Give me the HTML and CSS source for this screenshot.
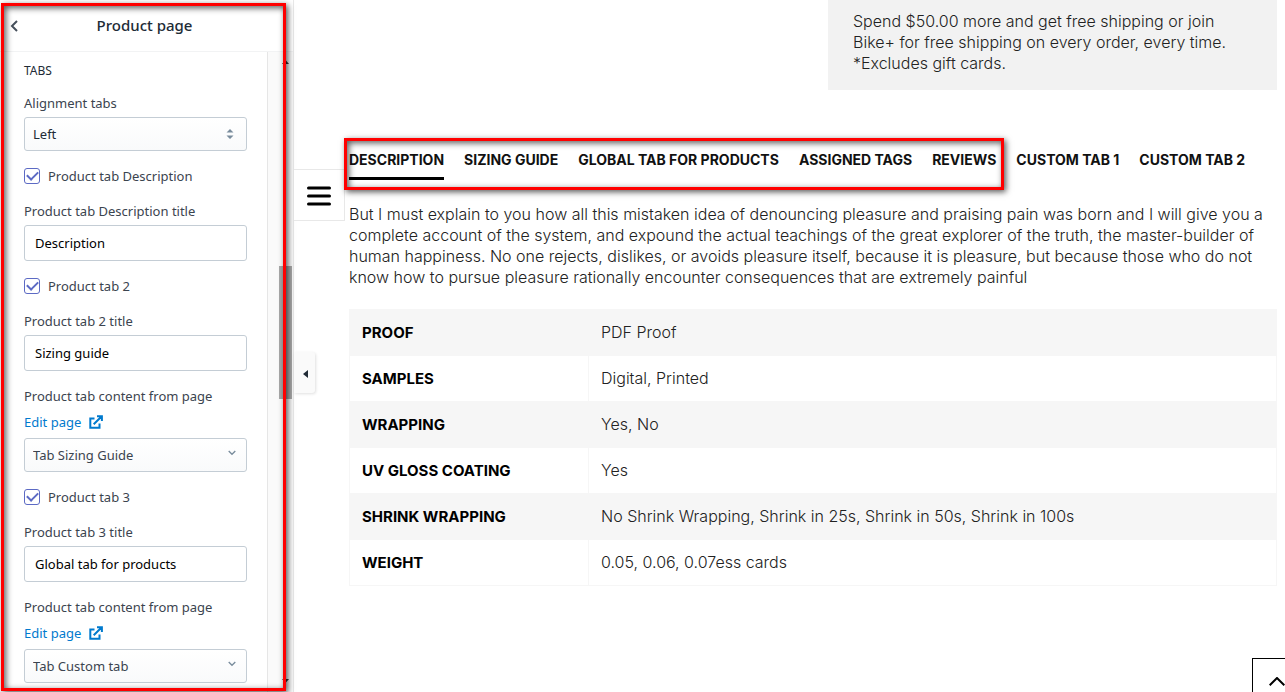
FILE: index.html
```html
<!DOCTYPE html>
<html lang="en">
<head>
<meta charset="utf-8">
<meta name="viewport" content="width=device-width, initial-scale=1">
<title>Product page</title>
<link rel="stylesheet" href="styles.css">
</head>
<body>
<div class="page">
  <aside class="sidebar">
    <header class="sidebar-head">
      <button class="back" type="button" aria-label="Back">
        <svg width="8" height="12" viewBox="0 0 8 12"><path d="M7 1 2 6l5 5" fill="none" stroke="#454f5b" stroke-width="2"/></svg>
      </button>
      <h1 class="sidebar-title">Product page</h1>
    </header>
    <div class="sidebar-body">
      <form class="settings">
        <h2 class="group-title">TABS</h2>
        <div class="field">
          <label for="align">Alignment tabs</label>
          <div class="select-wrap">
            <select id="align" class="control select select-dark"><option>Left</option></select>
            <svg class="sort-icon" width="8" height="12" viewBox="0 0 8 12"><path d="M.5 4.500 4 1l3.500 3.500zM.5 7.500h7L4 11z" fill="#798c9c"/></svg>
          </div>
        </div>
        <label class="check"><input type="checkbox" checked><span>Product tab Description</span></label>
        <div class="field">
          <label for="t1">Product tab Description title</label>
          <input id="t1" class="control text" type="text" value="Description">
        </div>
        <label class="check"><input type="checkbox" checked><span>Product tab 2</span></label>
        <div class="field">
          <label for="t2">Product tab 2 title</label>
          <input id="t2" class="control text" type="text" value="Sizing guide">
        </div>
        <div class="field field-page">
          <label for="p2">Product tab content from page</label>
          <a class="edit" href="#">Edit page
            <svg width="14" height="14" viewBox="0 0 14 14" fill="none" stroke="#007ace" stroke-width="2"><path d="M5.500 3.500H1.300V12.700H10.500V8.500M4.700 9.300 12 2M8 1.200h4.900V6"/></svg>
          </a>
          <div class="select-wrap">
            <select id="p2" class="control select"><option>Tab Sizing Guide</option></select>
            <svg class="caret-icon" width="8" height="6" viewBox="0 0 8 6"><path d="M.7 1 4 4.300 7.300 1" fill="none" stroke="#798c9c" stroke-width="1.300"/></svg>
          </div>
        </div>
        <label class="check"><input type="checkbox" checked><span>Product tab 3</span></label>
        <div class="field">
          <label for="t3">Product tab 3 title</label>
          <input id="t3" class="control text" type="text" value="Global tab for products">
        </div>
        <div class="field field-page">
          <label for="p3">Product tab content from page</label>
          <a class="edit" href="#">Edit page
            <svg width="14" height="14" viewBox="0 0 14 14" fill="none" stroke="#007ace" stroke-width="2"><path d="M5.500 3.500H1.300V12.700H10.500V8.500M4.700 9.300 12 2M8 1.200h4.900V6"/></svg>
          </a>
          <div class="select-wrap">
            <select id="p3" class="control select"><option>Tab Custom tab</option></select>
            <svg class="caret-icon" width="8" height="6" viewBox="0 0 8 6"><path d="M.7 1 4 4.300 7.300 1" fill="none" stroke="#798c9c" stroke-width="1.300"/></svg>
          </div>
        </div>
      </form>
      <div class="scrollbar">
        <svg width="7" height="4" viewBox="0 0 7 4"><path d="M0 4 3.500 0 7 4z" fill="#333"/></svg>
        <div class="thumb"></div>
        <svg width="7" height="4" viewBox="0 0 7 4"><path d="M0 0h7L3.500 4z" fill="#333"/></svg>
      </div>
    </div>
    <div class="mark mark-sidebar"></div>
    <button class="menu" type="button" aria-label="Menu">
      <svg width="24" height="20" viewBox="0 0 24 20"><path d="M1.500 2h21M1.500 10h21M1.500 18h21" stroke="#000" stroke-width="3" stroke-linecap="round"/></svg>
    </button>
    <button class="collapse" type="button" aria-label="Collapse">
      <svg width="5" height="8" viewBox="0 0 5 8"><path d="M5 0v8L0 4z" fill="#212b36"/></svg>
    </button>
  </aside>

  <main class="preview">
    <p class="promo">Spend $50.00 more and get free shipping or join Bike+ for free shipping on every order, every time. *Excludes gift cards.</p>
    <nav class="tabs">
      <button class="tab active" type="button">DESCRIPTION</button>
      <button class="tab" type="button">SIZING GUIDE</button>
      <button class="tab" type="button">GLOBAL TAB FOR PRODUCTS</button>
      <button class="tab" type="button">ASSIGNED TAGS</button>
      <button class="tab" type="button">REVIEWS</button>
      <button class="tab" type="button">CUSTOM TAB 1</button>
      <button class="tab" type="button">CUSTOM TAB 2</button>
      <div class="mark mark-tabs"></div>
    </nav>
    <p class="copy">But I must explain to you how all this mistaken idea of denouncing pleasure and praising pain was born and I will give you a complete account of the system, and expound the actual teachings of the great explorer of the truth, the master-builder of human happiness. No one rejects, dislikes, or avoids pleasure itself, because it is pleasure, but because those who do not know how to pursue pleasure rationally encounter consequences that are extremely painful</p>
    <table class="specs">
      <tr><th scope="row">PROOF</th><td>PDF Proof</td></tr>
      <tr><th scope="row">SAMPLES</th><td>Digital, Printed</td></tr>
      <tr><th scope="row">WRAPPING</th><td>Yes, No</td></tr>
      <tr><th scope="row">UV GLOSS COATING</th><td>Yes</td></tr>
      <tr><th scope="row">SHRINK WRAPPING</th><td>No Shrink Wrapping, Shrink in 25s, Shrink in 50s, Shrink in 100s</td></tr>
      <tr><th scope="row">WEIGHT</th><td>0.05, 0.06, 0.07ess cards</td></tr>
    </table>
    <button class="to-top" type="button" aria-label="Back to top">
      <svg width="16" height="9" viewBox="0 0 16 9"><path d="M.7 8.300 8 1l7.300 7.300" fill="none" stroke="#000" stroke-width="2"/></svg>
    </button>
  </main>
</div>
</body>
</html>
```
FILE: styles.css
```css
* { box-sizing: border-box; }

body {
  margin: 0;
  background: #fff;
  color: #212b36;
  font-family: "Noto Sans", "Open Sans", sans-serif;
  font-size: 13px;
  line-height: 20px;
}

button {
  padding: 0;
  border: 0;
  background: none;
  font: inherit;
  color: inherit;
}

svg { display: block; }

.page {
  display: flex;
  min-height: 100vh;
  overflow: hidden;
}

/* Settings sidebar */
.sidebar {
  position: relative;
  display: flex;
  flex-direction: column;
  flex: 0 0 294px;
  border-right: 1px solid #e8e8e8;
}

.sidebar-head {
  display: flex;
  align-items: center;
  height: 52px;
  padding: 0 22px 0 10px;
  border-bottom: 1px solid #f2f3f4;
}

.sidebar-title {
  flex: 1;
  margin: 0;
  padding-bottom: 2px;
  text-align: center;
  font-size: 15px;
  font-weight: 500;
}

.sidebar-body { display: flex; flex: 1; }

.settings {
  flex: 1;
  display: flex;
  flex-direction: column;
  gap: 15px;
  padding: 9px 20px 8px 24px;
}

.group-title {
  margin: 0 0 -3px;
  font-size: 12px;
  line-height: 20px;
  font-weight: 400;
}

.field { display: flex; flex-direction: column; gap: 4px; color: #3b444f; }
.field-page { gap: 6px; }

.control {
  display: block;
  width: 100%;
  border: 1px solid #c4cdd5;
  border-radius: 3px;
  font: inherit;
  color: #212b36;
}

.text { height: 36px; padding: 0 10px; background: #fff; color: #000; }

.select {
  appearance: none;
  height: 34px;
  padding: 0 8px;
  background: linear-gradient(#fff, #f9fafb);
  color: #3b444f;
}

.select-dark { color: #212b36; }
.select-wrap { position: relative; }
.sort-icon { position: absolute; right: 13px; top: 11px; }
.caret-icon { position: absolute; right: 11px; top: 12px; }

.check { display: flex; align-items: center; gap: 8px; color: #3b444f; }

.check input {
  appearance: none;
  display: grid;
  place-items: center;
  width: 16px;
  height: 16px;
  margin: 0;
  border: 1px solid #5c6ac4;
  border-radius: 3px;
}

.check input:checked::after {
  content: "";
  width: 9px;
  height: 5px;
  margin-bottom: 3px;
  border: solid #5c6ac4;
  border-width: 0 0 2px 2px;
  transform: rotate(-45deg);
}

.edit {
  display: flex;
  align-items: center;
  gap: 8px;
  color: #007ace;
  text-decoration: none;
}

.scrollbar {
  display: flex;
  flex-direction: column;
  align-items: center;
  width: 26px;
  padding: 8px 1px 9px 11px;
  border-left: 1px solid #e6e6e6;
  background: #fafafa;
}

.thumb { width: 13px; height: 133px; margin: 202px 0 auto; background: #a8a8a8; }

.menu {
  position: absolute;
  left: 294px;
  top: 169px;
  display: grid;
  place-items: center;
  width: 51px;
  height: 52px;
  padding-top: 2px;
  border: 1px solid #e8e8e8;
  border-left: 0;
  background: #fff;
}

.collapse {
  position: absolute;
  left: 294px;
  top: 352px;
  display: grid;
  place-items: center;
  width: 21px;
  height: 41px;
  padding: 2px 0 0 2px;
  border-radius: 0 3px 3px 0;
  background: #fafafa;
  box-shadow: 1px 1px 3px rgba(0, 0, 0, 0.12);
}

/* Highlight frames */
.mark {
  position: absolute;
  border: 3px solid #f00;
  box-shadow: 2px 2px 6px rgba(0, 0, 0, 0.65), inset 2px 2px 6px rgba(0, 0, 0, 0.65);
  pointer-events: none;
}

.mark-sidebar { inset: 3px 7px 1px 1px; }
.mark-tabs { left: -5px; top: -12px; width: 660px; height: 52px; }

/* Storefront preview */
.preview {
  position: relative;
  flex: 1;
  display: flex;
  flex-direction: column;
  padding: 0 8px 0 55px;
  color: #222;
  font-family: Inter, "Open Sans", sans-serif;
  font-size: 16px;
  line-height: 21px;
  font-weight: 300;
}

.promo {
  align-self: flex-end;
  width: 449px;
  margin: 0;
  padding: 11px 25px 16px;
  background: #f2f2f2;
}

.tabs {
  position: relative;
  display: flex;
  gap: 20px;
  margin-top: 60px;
  color: #111;
  font-size: 14px;
  line-height: 20px;
  font-weight: 700;
}

.tab { padding-bottom: 7px; border-bottom: 3px solid transparent; white-space: nowrap; }
.tab.active { border-color: #000; }

.copy { margin: 24px 0 21px; }

.specs { width: 100%; border-collapse: collapse; }

.specs th,
.specs td { height: 46px; padding: 0 12px 1px; border: 1px solid #f6f6f6; text-align: left; }

.specs th { width: 239px; color: #000; font-weight: 700; font-size: 15px; }
.specs tr:nth-child(odd) { background: #f6f6f6; }

.to-top {
  position: absolute;
  right: 0;
  bottom: 0;
  width: 33px;
  height: 34px;
  padding: 12px 0 0 16px;
  border: solid #000;
  border-width: 1px 0 0 1px;
  background: #fff;
  overflow: hidden;
}
```
